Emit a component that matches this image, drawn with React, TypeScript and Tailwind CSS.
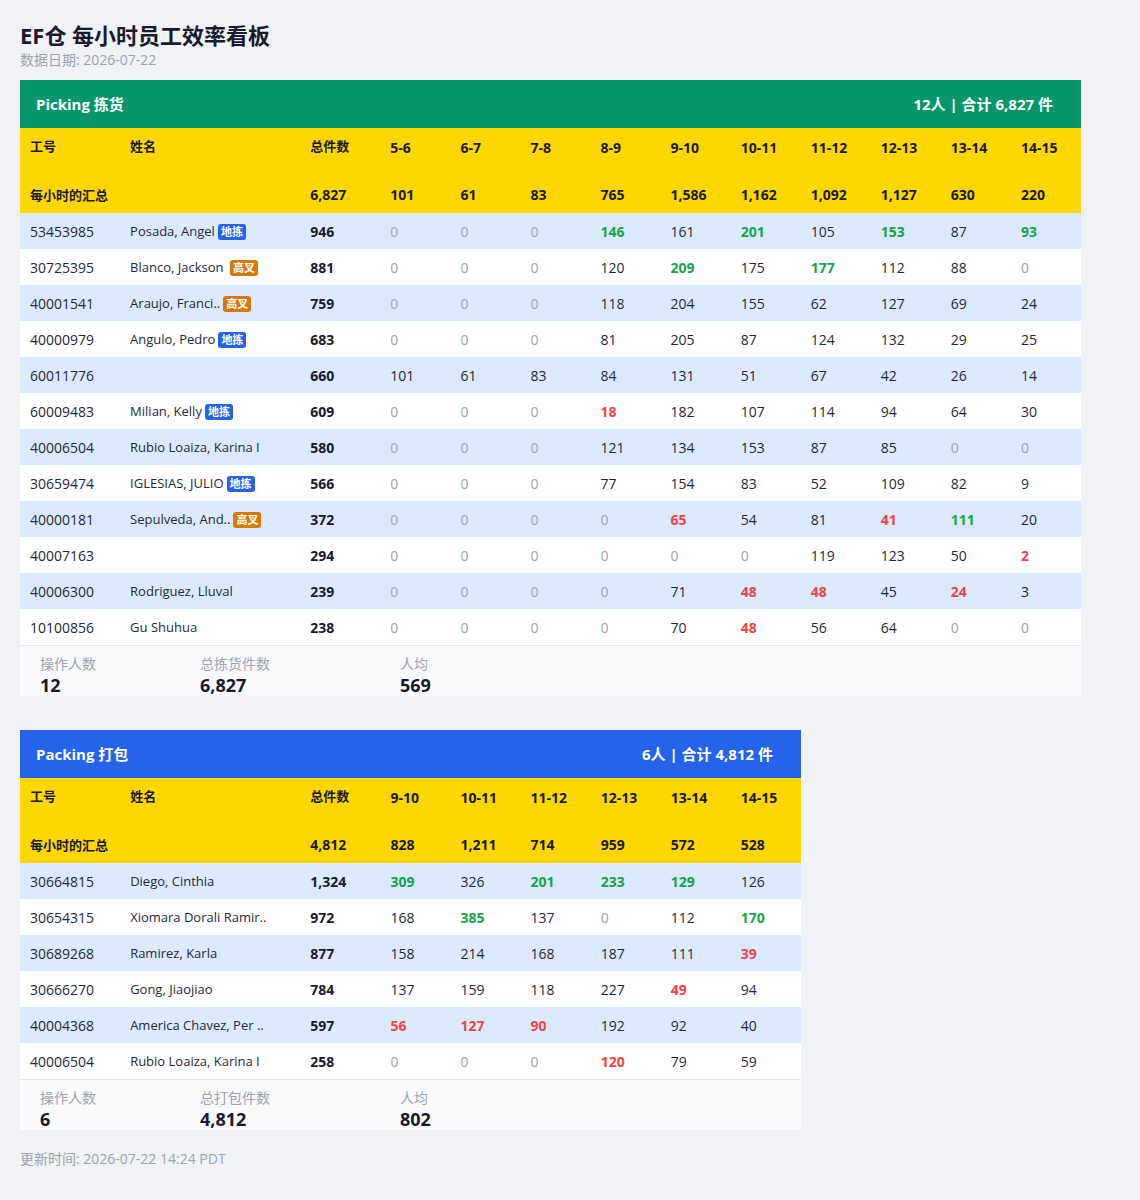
import React from 'react';

type Tone = 'g' | 'r' | 'n';
type Cell = number | [number, Tone];
type Row = { id: string; name: string; tag?: 'pick' | 'fork'; total: string; hours: Cell[] };

const pickingHours = ['5-6', '6-7', '7-8', '8-9', '9-10', '10-11', '11-12', '12-13', '13-14', '14-15'];
const pickingSum = ['101', '61', '83', '765', '1,586', '1,162', '1,092', '1,127', '630', '220'];

const pickingRows: Row[] = [
  { id: '53453985', name: 'Posada, Angel', tag: 'pick', total: '946', hours: [0, 0, 0, [146, 'g'], 161, [201, 'g'], 105, [153, 'g'], 87, [93, 'g']] },
  { id: '30725395', name: 'Blanco, Jackson\u00a0', tag: 'fork', total: '881', hours: [0, 0, 0, 120, [209, 'g'], 175, [177, 'g'], 112, 88, 0] },
  { id: '40001541', name: 'Araujo, Franci..', tag: 'fork', total: '759', hours: [0, 0, 0, 118, 204, 155, 62, 127, 69, 24] },
  { id: '40000979', name: 'Angulo, Pedro', tag: 'pick', total: '683', hours: [0, 0, 0, 81, 205, 87, 124, 132, 29, 25] },
  { id: '60011776', name: '', total: '660', hours: [101, 61, 83, 84, 131, 51, 67, 42, 26, 14] },
  { id: '60009483', name: 'Milian, Kelly', tag: 'pick', total: '609', hours: [0, 0, 0, [18, 'r'], 182, 107, 114, 94, 64, 30] },
  { id: '40006504', name: 'Rubio Loaiza, Karina I', total: '580', hours: [0, 0, 0, 121, 134, 153, 87, 85, 0, 0] },
  { id: '30659474', name: 'IGLESIAS, JULIO', tag: 'pick', total: '566', hours: [0, 0, 0, 77, 154, 83, 52, 109, 82, 9] },
  { id: '40000181', name: 'Sepulveda, And..', tag: 'fork', total: '372', hours: [0, 0, 0, 0, [65, 'r'], 54, 81, [41, 'r'], [111, 'g'], 20] },
  { id: '40007163', name: '', total: '294', hours: [0, 0, 0, 0, 0, 0, 119, 123, 50, [2, 'r']] },
  { id: '40006300', name: 'Rodriguez, Lluval', total: '239', hours: [0, 0, 0, 0, 71, [48, 'r'], [48, 'r'], 45, [24, 'r'], 3] },
  { id: '10100856', name: 'Gu Shuhua', total: '238', hours: [0, 0, 0, 0, 70, [48, 'r'], 56, 64, 0, 0] },
];

const packingHours = ['9-10', '10-11', '11-12', '12-13', '13-14', '14-15'];
const packingSum = ['828', '1,211', '714', '959', '572', '528'];

const packingRows: Row[] = [
  { id: '30664815', name: 'Diego, Cinthia', total: '1,324', hours: [[309, 'g'], 326, [201, 'g'], [233, 'g'], [129, 'g'], 126] },
  { id: '30654315', name: 'Xiomara Dorali Ramir..', total: '972', hours: [168, [385, 'g'], 137, 0, 112, [170, 'g']] },
  { id: '30689268', name: 'Ramirez, Karla', total: '877', hours: [158, 214, 168, 187, 111, [39, 'r']] },
  { id: '30666270', name: 'Gong, Jiaojiao', total: '784', hours: [137, 159, 118, 227, [49, 'r'], 94] },
  { id: '40004368', name: 'America Chavez, Per ..', total: '597', hours: [[56, 'r'], [127, 'r'], [90, 'r'], 192, 92, 40] },
  { id: '40006504', name: 'Rubio Loaiza, Karina I', total: '258', hours: [0, 0, 0, [120, 'r'], 79, 59] },
];

function Tag({ kind }: { kind: 'pick' | 'fork' }) {
  return (
    <span
      className={`ml-[3px] inline-block h-[16px] rounded-[3px] px-[3px] text-[11px] font-bold leading-[16px] text-white ${
        kind === 'pick' ? 'bg-[#2563eb]' : 'bg-[#d97706]'
      }`}
    >
      {kind === 'pick' ? '地拣' : '高叉'}
    </span>
  );
}

function HourCell({ cell }: { cell: Cell }) {
  const [v, tone] = Array.isArray(cell) ? cell : [cell, 'n' as Tone];
  if (tone === 'g') return <td className="px-[10px] font-bold text-[#16a34a]">{v}</td>;
  if (tone === 'r') return <td className="px-[10px] font-bold text-[#ef4444]">{v}</td>;
  if (v === 0) return <td className="px-[10px] text-[#9ca3af]">0</td>;
  return <td className="px-[10px]">{v}</td>;
}

function Board({
  title,
  summary,
  headColor,
  hours,
  sums,
  total,
  rows,
  stats,
}: {
  title: string;
  summary: string;
  headColor: string;
  hours: string[];
  sums: string[];
  total: string;
  rows: Row[];
  stats: [string, string][];
}) {
  const width = 360 + hours.length * 70 + 1;
  return (
    <section style={{ width }} className="bg-white">
      <div className={`flex h-[48px] items-center justify-between pl-[16px] pr-[28px] text-[15px] font-bold text-white ${headColor}`}>
        <span>{title}</span>
        <span>{summary}</span>
      </div>
      <table className="w-full table-fixed border-collapse text-left text-[14px] text-[#1f2937]">
        <colgroup>
          <col className="w-[100px]" />
          <col className="w-[180px]" />
          <col className="w-[80px]" />
          {hours.map((h) => (
            <col key={h} className="w-[70px]" />
          ))}
        </colgroup>
        <thead className="bg-[#ffd700] text-[13px] font-bold text-[#1a1a2e]">
          <tr className="h-[38px]">
            <th className="px-[10px]">工号</th>
            <th className="px-[10px]">姓名</th>
            <th className="px-[10px]">总件数</th>
            {hours.map((h) => (
              <th key={h} className="px-[10px] text-[14px]">{h}</th>
            ))}
          </tr>
          <tr className="h-[47px] align-bottom">
            <th className="px-[10px] pb-[8px]">每小时的汇总</th>
            <th />
            <th className="px-[10px] pb-[8px] text-[14px]">{total}</th>
            {sums.map((s, i) => (
              <th key={i} className="px-[10px] pb-[8px] text-[14px]">{s}</th>
            ))}
          </tr>
        </thead>
        <tbody>
          {rows.map((r, i) => (
            <tr key={r.id + i} className={`h-[36px] ${i % 2 === 0 ? 'bg-[#dbeafe]' : 'bg-white'}`}>
              <td className="px-[10px]">{r.id}</td>
              <td className="whitespace-pre px-[10px] pt-[1px] text-[13px]">
                {r.name}
                {r.tag && <Tag kind={r.tag} />}
              </td>
              <td className="px-[10px] font-bold text-[#1a1a2e]">{r.total}</td>
              {r.hours.map((c, j) => (
                <HourCell key={j} cell={c} />
              ))}
            </tr>
          ))}
        </tbody>
      </table>
      <div className="flex h-[51px] border-t border-[#e5e7eb] bg-[#f8fafc] pl-[20px] pt-[8px]">
        {stats.map(([label, value], i) => (
          <div key={label} className={i === 0 ? 'w-[160px]' : 'w-[200px]'}>
            <div className="text-[14px] leading-[19px] text-[#9ca3af]">{label}</div>
            <div className="text-[18px] font-bold leading-[24px] text-[#1a1a2e]">{value}</div>
          </div>
        ))}
      </div>
    </section>
  );
}

export default function App() {
  return (
    <div
      className="min-h-[1200px] bg-[#f0f2f5] px-[20px] pt-[20px] pb-[30px]"
      style={{ fontFamily: '"Open Sans", "Noto Sans CJK SC", sans-serif' }}
    >
      <h1 className="text-[22px] font-bold leading-[30px] text-[#1a1a2e]">EF仓 每小时员工效率看板</h1>
      <div className="text-[14px] leading-[20px] text-[#9ca3af]">数据日期: 2026-07-22</div>

      <div className="mt-[10px] flex flex-col gap-[34px]">
        <Board
          title="Picking 拣货"
          summary="12人 | 合计 6,827 件"
          headColor="bg-[#059669]"
          hours={pickingHours}
          sums={pickingSum}
          total="6,827"
          rows={pickingRows}
          stats={[
            ['操作人数', '12'],
            ['总拣货件数', '6,827'],
            ['人均', '569'],
          ]}
        />
        <Board
          title="Packing 打包"
          summary="6人 | 合计 4,812 件"
          headColor="bg-[#2563eb]"
          hours={packingHours}
          sums={packingSum}
          total="4,812"
          rows={packingRows}
          stats={[
            ['操作人数', '6'],
            ['总打包件数', '4,812'],
            ['人均', '802'],
          ]}
        />
      </div>

      <div className="mt-[19px] text-[14px] leading-[20px] text-[#9ca3af]">更新时间: 2026-07-22 14:24 PDT</div>
    </div>
  );
}
